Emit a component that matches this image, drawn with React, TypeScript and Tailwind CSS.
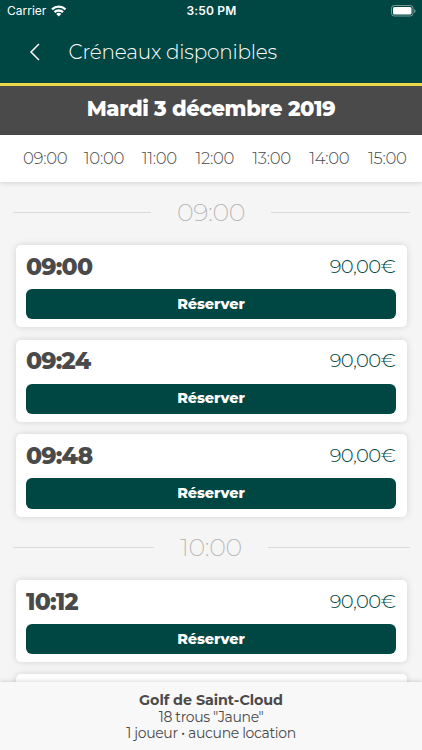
import React from 'react';
import { clsx } from 'clsx';

interface Slot {
  time: string;
  price: string;
}

interface SlotGroup {
  label: string;
  labelClass: string;
  className: string;
  slots: Slot[];
}

const hours = [
  { label: '09:00', className: 'w-[45px]' },
  { label: '10:00', className: 'w-[42px]' },
  { label: '11:00', className: 'w-[38px]' },
  { label: '12:00', className: 'w-[41px]' },
  { label: '13:00', className: 'w-[41px]' },
  { label: '14:00', className: 'w-[43px]' },
  { label: '15:00', className: 'w-[40px]' },
];

const groups: SlotGroup[] = [
  {
    label: '09:00',
    labelClass: 'w-[120px]',
    className: 'pt-[14px]',
    slots: [
      { time: '09:00', price: '90,00€' },
      { time: '09:24', price: '90,00€' },
      { time: '09:48', price: '90,00€' },
    ],
  },
  {
    label: '10:00',
    labelClass: 'w-[114px]',
    className: 'pt-[13.6px]',
    slots: [
      { time: '10:12', price: '90,00€' },
      { time: '10:24', price: '90,00€' },
    ],
  },
];

const StatusBar: React.FC = () => (
  <div className="grid h-[22px] grid-cols-3 items-center pr-[6px] pl-[7px] font-['Inter',sans-serif] text-[12px] leading-none">
    <div className="flex items-center gap-[5px]">
      <span>Carrier</span>
      <svg width="15.5" height="11.5" viewBox="0 0 16 12" fill="none" stroke="currentColor" strokeWidth="2.5">
        <path d="M1 4.6a10 10 0 0 1 14 0" />
        <path d="M3.6 7.5a6.3 6.3 0 0 1 8.8 0" />
        <path d="M8 12 5.400 9.400a3.700 3.700 0 0 1 5.200 0z" fill="currentColor" stroke="none" />
      </svg>
    </div>
    <span className="text-center font-semibold tracking-[0.2px]">3:50 PM</span>
    <svg className="justify-self-end" width="25" height="12" viewBox="0 0 25 12" fill="none">
      <rect x="0.5" y="0.5" width="21.5" height="10.5" rx="2.8" stroke="#fff" strokeOpacity="0.45" />
      <rect x="2" y="2" width="18.5" height="7.5" rx="1.5" fill="#fff" />
      <path d="M23.300 4v4c.8-.3 1.200-1.100 1.200-2s-.4-1.700-1.200-2z" fill="#fff" fillOpacity="0.5" />
    </svg>
  </div>
);

const SlotCard: React.FC<{ slot: Slot }> = ({ slot }) => (
  <div className="h-[82.5px] rounded-[5px] bg-white px-[10.5px] pt-[8px] shadow-[0_0_7px_rgba(0,0,0,0.14)]">
    <div className="flex h-[27px] items-center justify-between">
      <span className="text-[23.5px] leading-none font-extrabold tracking-[-0.8px]">{slot.time}</span>
      <span className="pr-[0.8px] text-[19.5px] leading-none font-light tracking-[-0.6px] text-[#004643]">{slot.price}</span>
    </div>
    <button
      type="button"
      className="mt-[9px] flex h-[30.5px] w-full items-center justify-center rounded-[6px] bg-[#004643] pt-px text-[14.5px] font-extrabold tracking-[-0.1px] text-white"
    >
      Réserver
    </button>
  </div>
);

const App: React.FC = () => (
  <div className="flex h-[750px] w-[422px] flex-col overflow-hidden bg-[#f5f5f5] font-['Montserrat','Inter',sans-serif] text-[#4a4a4a]">
    <header className="h-[86px] shrink-0 border-b-[3px] border-[#ecd649] bg-[#004643] text-white">
      <StatusBar />
      <div className="flex h-[60px] items-center pl-[29px]">
        <svg width="11" height="18" viewBox="0 0 11 18" fill="none" stroke="currentColor" strokeWidth="1.5">
          <path d="M10 1 2 9l8 8" />
        </svg>
        <h1 className="ml-[28.5px] text-[20px] font-light tracking-[-0.2px] whitespace-nowrap">Créneaux disponibles</h1>
      </div>
    </header>

    <div className="flex h-[48.5px] shrink-0 items-center justify-center bg-[#4a4a4a] pb-[3px] text-[21px] font-extrabold tracking-[-0.4px] whitespace-nowrap text-white">
      Mardi 3 décembre 2019
    </div>

    <nav className="z-10 flex h-[47px] shrink-0 items-center justify-between bg-white pt-[1px] pr-[14px] pl-[23px] text-[16.5px] font-[350] tracking-[-0.3px] shadow-[0_1px_5px_rgba(0,0,0,0.14)]">
      {hours.map(hour => (
        <span key={hour.label} className={clsx('whitespace-nowrap', hour.className)}>{hour.label}</span>
      ))}
    </nav>

    <main className="min-h-0 flex-1 overflow-hidden">
      {groups.map(group => (
        <section key={group.label} className={group.className}>
          <div className="flex h-[34px] items-center px-[12.5px]">
            <div className="h-px flex-1 bg-[#dadada]" />
            <span className={clsx('pb-px text-center text-[25.5px] leading-none font-extralight tracking-[-0.4px] text-[#b0b0b0]', group.labelClass)}>
              {group.label}
            </span>
            <div className="h-px flex-1 bg-[#dadada]" />
          </div>
          <div className="mt-[15.4px] flex flex-col gap-[12.2px] px-[15.5px]">
            {group.slots.map(slot => (
              <SlotCard key={slot.time} slot={slot} />
            ))}
          </div>
        </section>
      ))}
    </main>

    <footer className="z-10 flex h-[68px] shrink-0 flex-col items-center bg-[#f8f8f8] pt-[10px] text-[14px] leading-[16.5px] font-normal tracking-[-0.35px] shadow-[0_-1px_4px_rgba(0,0,0,0.14)]">
      <p className="text-[14.3px] font-bold tracking-[-0.05px]">Golf de Saint-Cloud</p>
      <p>18 trous "Jaune"</p>
      <p>1 joueur • aucune location</p>
    </footer>
  </div>
);

export default App;
